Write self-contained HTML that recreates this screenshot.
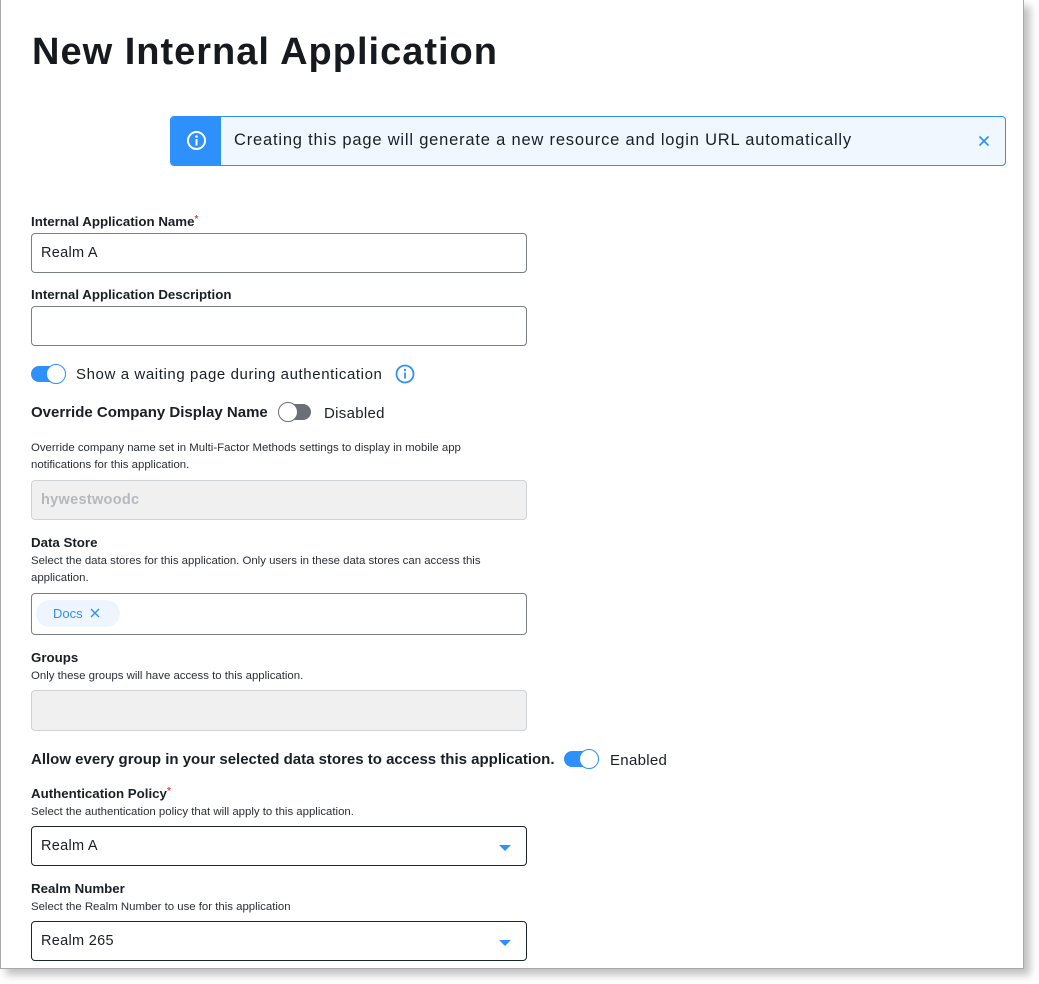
<!DOCTYPE html>
<html><head><meta charset="utf-8"><style>
*{box-sizing:border-box;margin:0;padding:0}
body{width:1039px;height:984px;background:#fff;font-family:"Liberation Sans",sans-serif;color:#1a1f26;position:relative;overflow:hidden}
.frame{position:absolute;left:0;top:0;width:1024px;height:969px;border:1px solid #a8a8a8;border-top:none;background:#fff;box-shadow:6px 6px 8px rgba(0,0,0,.25)}
.a{position:absolute;white-space:nowrap}
.lbl{font-size:13.3px;font-weight:bold;color:#1a1f26}
.help{font-size:11.4px;color:#2a2f36}
.inp{position:absolute;left:31px;width:496px;height:40px;border:1px solid #7a7f86;border-radius:4px;background:#fff}
.dis{background:#f0f0f0;border-color:#d0d3d6}
.sel{border-color:#1e2530}
.val{position:absolute;left:9px;top:11px;font-size:14.5px;color:#1a1f26;letter-spacing:.3px}
.req{color:#e5484d;font-size:10px;vertical-align:top}
.tog{position:absolute;width:35px;height:16px;border-radius:8px}
.knob{position:absolute;top:-2px;width:20px;height:20px;border-radius:50%;background:#fff}
.caret{position:absolute;right:15px;top:18px;width:0;height:0;border-left:6px solid transparent;border-right:6px solid transparent;border-top:6px solid #2e90fa}
</style></head><body>
<div class="frame"></div>
<div class="a" style="left:32px;top:31px;font-size:38px;font-weight:bold;color:#16191d;letter-spacing:1px">New Internal Application</div>

<div class="a" style="left:170px;top:116px;width:836px;height:50px;border:1px solid #2e90fa;border-radius:4px;background:#f0f7ff;overflow:hidden">
 <div style="position:absolute;left:0;top:0;width:50px;height:48px;background:#2e90fa"></div>
 <svg style="position:absolute;left:15px;top:13px" width="21" height="21" viewBox="0 0 21 21"><circle cx="10.5" cy="10.5" r="8.5" fill="none" stroke="#fff" stroke-width="2"/><circle cx="10.5" cy="6.5" r="1.3" fill="#fff"/><rect x="9.5" y="9" width="2" height="6.5" fill="#fff"/></svg>
 <div class="a" style="left:63px;top:14px;font-size:16.5px;color:#1a1f26;letter-spacing:.8px">Creating this page will generate a new resource and login URL automatically</div>
 <svg style="position:absolute;left:807px;top:18px" width="12" height="12" viewBox="0 0 12 12"><path d="M1.5 1.5L10.5 10.5M10.5 1.5L1.5 10.5" stroke="#2e90fa" stroke-width="1.6"/></svg>
</div>

<div class="a lbl" style="left:31px;top:214px">Internal Application Name<span class="req">*</span></div>
<div class="inp" style="top:233px;height:40px"><div class="val">Realm A</div></div>
<div class="a lbl" style="left:31px;top:287px">Internal Application Description</div>
<div class="inp" style="top:306px"></div>

<div class="tog" style="left:31px;top:366px;background:#2e90fa"><div class="knob" style="left:15px;border:1.5px solid #2e90fa"></div></div>
<div class="a" style="left:76px;top:366px;font-size:15px;letter-spacing:.6px">Show a waiting page during authentication</div>
<svg class="a" style="left:395px;top:364px" width="20" height="20" viewBox="0 0 20 20"><circle cx="10" cy="10" r="8.5" fill="none" stroke="#2e90fa" stroke-width="1.8"/><circle cx="10" cy="6" r="1.2" fill="#2e90fa"/><rect x="9.1" y="8.5" width="1.8" height="6" fill="#2e90fa"/></svg>

<div class="a" style="left:31px;top:404px;font-size:15px;font-weight:bold">Override Company Display Name</div>
<div class="tog" style="left:279px;top:404px;width:32px;background:#6b7078"><div class="knob" style="left:-1px;border:1.5px solid #6b7078"></div></div>
<div class="a" style="left:324px;top:405px;font-size:15px;letter-spacing:.3px">Disabled</div>

<div class="a help" style="left:31px;top:442px">Override company name set in Multi-Factor Methods settings to display in mobile app</div>
<div class="a help" style="left:31px;top:459px">notifications for this application.</div>
<div class="inp dis" style="top:480px"><div class="val" style="color:#b5b8bc;font-weight:bold">hywestwoodc</div></div>

<div class="a lbl" style="left:31px;top:535px">Data Store</div>
<div class="a help" style="left:31px;top:555px">Select the data stores for this application. Only users in these data stores can access this</div>
<div class="a help" style="left:31px;top:572px">application.</div>
<div class="inp" style="top:593px;height:42px"><div class="a" style="left:4px;top:6px;width:84px;height:27px;border-radius:14px;background:#eef5fe;color:#2e90fa;font-size:13px;padding:6px 0 0 17px">Docs <svg style="position:absolute;left:54px;top:8px" width="10" height="10" viewBox="0 0 10 10"><path d="M1 1L9 9M9 1L1 9" stroke="#2e90fa" stroke-width="1.4"/></svg></div></div>

<div class="a lbl" style="left:31px;top:650px">Groups</div>
<div class="a help" style="left:31px;top:670px">Only these groups will have access to this application.</div>
<div class="inp dis" style="top:690px;height:41px"></div>

<div class="a" style="left:31px;top:751px;font-size:15px;font-weight:bold">Allow every group in your selected data stores to access this application.</div>
<div class="tog" style="left:564px;top:751px;background:#2e90fa"><div class="knob" style="left:15px;border:1.5px solid #2e90fa"></div></div>
<div class="a" style="left:610px;top:752px;font-size:15px;letter-spacing:.3px">Enabled</div>

<div class="a lbl" style="left:31px;top:786px">Authentication Policy<span class="req">*</span></div>
<div class="a help" style="left:31px;top:806px">Select the authentication policy that will apply to this application.</div>
<div class="inp sel" style="top:826px"><div class="val">Realm A</div><div class="caret"></div></div>

<div class="a lbl" style="left:31px;top:881px">Realm Number</div>
<div class="a help" style="left:31px;top:901px">Select the Realm Number to use for this application</div>
<div class="inp sel" style="top:921px"><div class="val">Realm 265</div><div class="caret"></div></div>
</body></html>
